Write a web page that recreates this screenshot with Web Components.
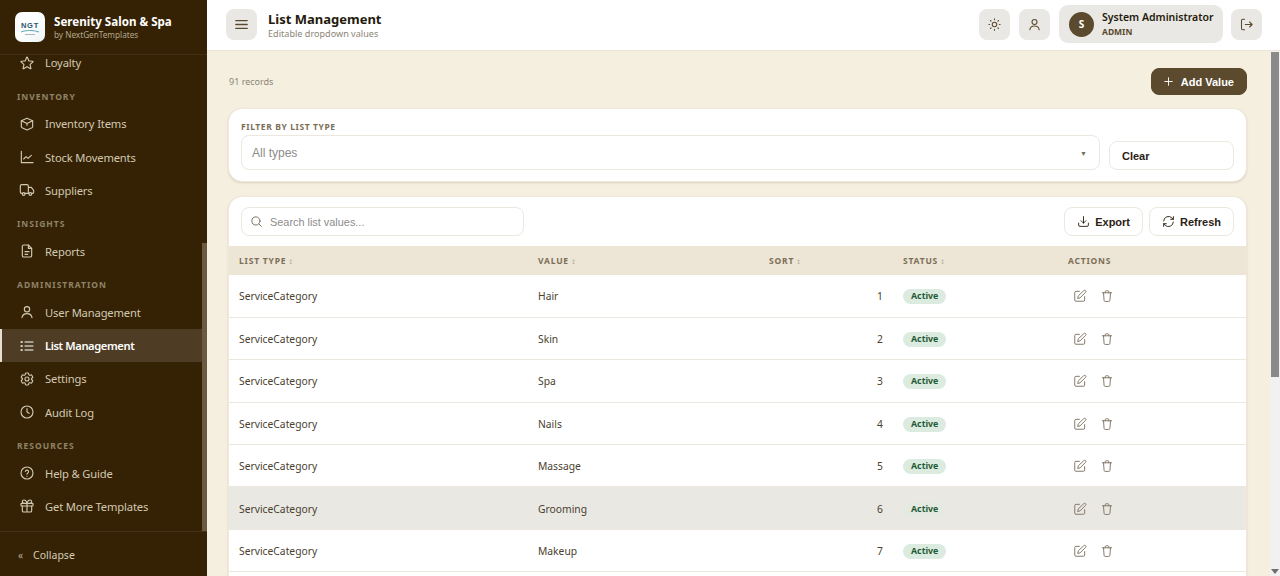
<!DOCTYPE html>
<html lang="en">
<head>
<meta charset="UTF-8">
<title>List Management</title>
<style>
  html, body { margin: 0; height: 100%; overflow: hidden; }
  body { font-family: "Noto Sans", "Liberation Sans", sans-serif; background: #f5efe0; }
</style>
</head>
<body>
<app-shell>
  <app-sidebar slot="sidebar">
    <nav-item icon="star">Loyalty</nav-item>
    <nav-section>INVENTORY</nav-section>
    <nav-item icon="box">Inventory Items</nav-item>
    <nav-item icon="chart">Stock Movements</nav-item>
    <nav-item icon="truck">Suppliers</nav-item>
    <nav-section>INSIGHTS</nav-section>
    <nav-item icon="doc">Reports</nav-item>
    <nav-section>ADMINISTRATION</nav-section>
    <nav-item icon="user">User Management</nav-item>
    <nav-item icon="list" active>List Management</nav-item>
    <nav-item icon="cog">Settings</nav-item>
    <nav-item icon="clock">Audit Log</nav-item>
    <nav-section>RESOURCES</nav-section>
    <nav-item icon="help">Help &amp; Guide</nav-item>
    <nav-item icon="gift">Get More Templates</nav-item>
  </app-sidebar>
  <top-bar slot="topbar" heading="List Management" sub="Editable dropdown values"></top-bar>
  <list-page></list-page>
</app-shell>

<script>
  const ICONS = {
    star: '<path d="M11.48 3.5a.56.56 0 0 1 1.04 0l2.13 5.11a.56.56 0 0 0 .47.35l5.52.44c.5.04.7.66.32.99l-4.2 3.6a.56.56 0 0 0-.18.56l1.28 5.38a.56.56 0 0 1-.84.61l-4.72-2.88a.56.56 0 0 0-.59 0l-4.72 2.88a.56.56 0 0 1-.84-.61l1.28-5.38a.56.56 0 0 0-.18-.56l-4.2-3.6a.56.56 0 0 1 .32-.99l5.52-.44a.56.56 0 0 0 .47-.35z"/>',
    box: '<path d="M12 3.5l8.5 3.6v8.6c0 .8-.4 1.4-1.1 1.8L12 21l-7.4-3.5c-.7-.4-1.1-1-1.1-1.8V7.100z"/><path d="M3.500 7.100l8.500 4 8.500-4M12 11.100V14"/>',
    chart: '<path d="M3.500 3.500V20.500H21"/><path d="M7 15l3.500-3.500 3 2.500 5-4.500"/>',
    truck: '<path d="M14 17H9M5 17H4a2 2 0 0 1-2-2V6a2 2 0 0 1 2-2h8a2 2 0 0 1 2 2v11h1M19 17h1.500a1.500 1.500 0 0 0 1.500-1.500v-3L18.500 8H14"/><circle cx="7" cy="18" r="2"/><circle cx="17" cy="18" r="2"/>',
    doc: '<path d="M14 3H7a2 2 0 0 0-2 2v14a2 2 0 0 0 2 2h10a2 2 0 0 0 2-2V8z"/><path d="M14 3v5h5M9 13h6M9 17h4"/>',
    user: '<circle cx="12" cy="8" r="4"/><path d="M4.500 20.500c.6-3.700 3.500-6 7.500-6s6.900 2.300 7.500 6"/>',
    list: '<path d="M9 6h12M9 12h12M9 18h12"/><path d="M3.500 6h1M3.500 12h1M3.500 18h1" stroke-width="2.600"/>',
    cog: '<path d="M9.594 3.94c.09-.542.56-.94 1.11-.94h2.593c.55 0 1.02.398 1.11.94l.213 1.281c.063.374.313.686.645.87.074.04.147.083.22.127.325.196.72.257 1.075.124l1.217-.456a1.125 1.125 0 0 1 1.37.49l1.296 2.247a1.125 1.125 0 0 1-.26 1.431l-1.003.827c-.293.241-.438.613-.43.992a7.723 7.723 0 0 1 0 .255c-.008.378.137.75.43.991l1.004.827c.424.35.534.955.26 1.43l-1.298 2.247a1.125 1.125 0 0 1-1.369.491l-1.217-.456c-.355-.133-.75-.072-1.076.124a6.47 6.47 0 0 1-.22.128c-.331.183-.581.495-.644.869l-.213 1.281c-.09.543-.56.94-1.11.94h-2.594c-.55 0-1.019-.398-1.11-.94l-.213-1.281c-.062-.374-.312-.686-.644-.87a6.52 6.52 0 0 1-.22-.127c-.325-.196-.72-.257-1.076-.124l-1.217.456a1.125 1.125 0 0 1-1.369-.49l-1.297-2.247a1.125 1.125 0 0 1 .26-1.431l1.004-.827c.292-.24.437-.613.43-.991a6.932 6.932 0 0 1 0-.255c.007-.38-.138-.751-.43-.992l-1.004-.827a1.125 1.125 0 0 1-.26-1.43l1.297-2.247a1.125 1.125 0 0 1 1.37-.491l1.216.456c.356.133.751.072 1.076-.124.072-.044.146-.086.22-.128.332-.183.582-.495.644-.869z"/><circle cx="12" cy="12" r="3"/>',
    clock: '<circle cx="12" cy="12" r="9"/><path d="M12 7v5l3 2"/>',
    help: '<circle cx="12" cy="12" r="9"/><path d="M9.500 9.500a2.500 2.500 0 0 1 4.900.7c0 1.700-2.400 2.100-2.400 3.600M12 17h.01"/>',
    gift: '<rect x="3" y="8" width="18" height="4" rx="1"/><path d="M12 8v13M19 12v7a2 2 0 0 1-2 2H7a2 2 0 0 1-2-2v-7M7.500 8a2.500 2.500 0 0 1 0-5C10 3 11.500 5.500 12 8c.5-2.500 2-5 4.500-5a2.500 2.500 0 0 1 0 5"/>',
    menu: '<path d="M4 6.500h16M4 12h16M4 17.500h16"/>',
    sun: '<circle cx="12" cy="12" r="3.600"/><path d="M12 3v1.200M12 19.800V21M3 12h1.200M19.800 12H21M5.600 5.600l.9.9M17.500 17.500l.9.9M5.600 18.400l.9-.9M17.500 6.500l.9-.9"/>',
    logout: '<path d="M9 3.500H6a2 2 0 0 0-2 2v13a2 2 0 0 0 2 2h3"/><path d="M10 12h11M17 8l4 4-4 4"/>',
    plus: '<path d="M12 5v14M5 12h14"/>',
    search: '<circle cx="11" cy="11" r="7.500"/><path d="M21 21l-4.500-4.500"/>',
    download: '<path d="M12 3v12M7.500 10.500L12 15l4.500-4.500"/><path d="M3 15v3.500A2.500 2.500 0 0 0 5.500 21h13a2.500 2.500 0 0 0 2.500-2.500V15"/>',
    refresh: '<path d="M3 11a9 9 0 0 1 15.700-5.300L21 8M21 3v5h-5M21 13a9 9 0 0 1-15.700 5.300L3 16M8 16H3v5"/>',
    edit: '<path d="M11 4H5a2 2 0 0 0-2 2v13a2 2 0 0 0 2 2h13a2 2 0 0 0 2-2v-6"/><path d="M18.500 2.800a2.100 2.100 0 0 1 3 3L12 15.300l-4 1 1-4z"/>',
    trash: '<path d="M4 6.500h16M9 6.500V4.500a1.500 1.500 0 0 1 1.500-1.500h3A1.500 1.500 0 0 1 15 4.500v2M6 6.500l1 13a2 2 0 0 0 2 1.800h6a2 2 0 0 0 2-1.800l1-13"/>'
  };

  class AppIcon extends HTMLElement {
    connectedCallback() {
      const size = this.getAttribute('size') || 16;
      const sw = this.getAttribute('stroke') || 1.7;
      this.attachShadow({ mode: 'open' }).innerHTML = `
        <style>:host { display: inline-flex; flex: none; } svg { display: block; }</style>
        <svg width="${size}" height="${size}" viewBox="0 0 24 24" fill="none" stroke="currentColor"
             stroke-width="${sw}" stroke-linecap="round" stroke-linejoin="round">${ICONS[this.getAttribute('name')]}</svg>`;
    }
  }
  customElements.define('app-icon', AppIcon);

  class AppShell extends HTMLElement {
    constructor() {
      super();
      this.attachShadow({ mode: 'open' }).innerHTML = `
        <style>
          :host { display: flex; height: 576px; overflow: hidden; }
          .main { flex: 1; min-width: 0; display: flex; flex-direction: column; }
          .body { flex: 1; min-height: 0; display: flex; }
          .page { flex: 1; min-width: 0; overflow: hidden; }
          .rail { width: 10px; flex: none; background: #f1f1f1; display: flex; flex-direction: column; }
          .thumb { width: 8px; margin: 1px 1px 0; height: 325px; background: #8a8a8a; }
          .down { margin-top: auto; margin-bottom: 2px; align-self: center; width: 0; height: 0;
                  border: 4px solid transparent; border-top: 5px solid #6e6e6e; border-bottom: 0; }
        </style>
        <slot name="sidebar"></slot>
        <div class="main">
          <slot name="topbar"></slot>
          <div class="body">
            <div class="page"><slot></slot></div>
            <div class="rail"><div class="thumb"></div><div class="down"></div></div>
          </div>
        </div>`;
    }
  }
  customElements.define('app-shell', AppShell);

  class AppSidebar extends HTMLElement {
    constructor() {
      super();
      this.attachShadow({ mode: 'open' }).innerHTML = `
        <style>
          :host { display: flex; flex-direction: column; width: 207px; flex: none; height: 576px;
                  background: #352204; color: #d6cdb8; }
          .brand { height: 55px; flex: none; box-sizing: border-box; display: flex; align-items: center;
                   gap: 9px; padding: 0 0 0 15px; border-bottom: 1px solid #432f13; }
          .logo { width: 30px; height: 30px; border-radius: 7px; background: linear-gradient(135deg, #fff 40%, #edf4f5);
                  display: flex; flex-direction: column; align-items: center; justify-content: center; gap: 1px; padding-top: 3px; box-sizing: border-box; }
          .logo b { font: 800 7.500px/7px "Liberation Sans", sans-serif; color: #26566e; letter-spacing: .8px; }
          .logo svg { display: block; }
          .name { font-size: 11.600px; line-height: 15px; font-weight: 700; color: #fff; white-space: nowrap; }
          .by { font-size: 8.200px; line-height: 11px; color: #b3a78f; white-space: nowrap; }
          .scroll { flex: 1; min-height: 0; display: flex; }
          .nav { flex: 1; min-width: 0; overflow: hidden; }
          /* the nav is scrolled a little, Loyalty sits under the brand row */
          .inner { margin-top: -8.700px; }
          .rail { width: 5px; flex: none; }
          .thumb { margin-top: 188px; height: 288px; background: #6a5a41; }
          .foot { height: 45px; flex: none; box-sizing: border-box; border-top: 1px solid #463216;
                  display: flex; align-items: center; gap: 10px; padding: 2px 0 0 18px;
                  font-size: 10.500px; color: #d6cdb8; }
          .foot i { font-style: normal; font-size: 10px; color: #b3a78f; }
        </style>
        <div class="brand">
          <div class="logo">
            <b>NGT</b>
            <svg width="20" height="5" viewBox="0 0 20 5"><path d="M1 2c5-2 12-2 18 0" fill="none" stroke="#5fa3b5" stroke-width="1"/><path d="M5 4.500h10" stroke="#9aa6aa" stroke-width=".8"/></svg>
          </div>
          <div><div class="name">Serenity Salon &amp; Spa</div><div class="by">by NextGenTemplates</div></div>
        </div>
        <div class="scroll">
          <div class="nav"><div class="inner"><slot></slot></div></div>
          <div class="rail"><div class="thumb"></div></div>
        </div>
        <div class="foot"><i>«</i><span>Collapse</span></div>`;
    }
  }
  customElements.define('app-sidebar', AppSidebar);

  class NavSection extends HTMLElement {
    constructor() {
      super();
      this.attachShadow({ mode: 'open' }).innerHTML = `
        <style>
          :host { display: block; box-sizing: border-box; height: 27.600px; padding: 11px 0 0 17px;
                  font-size: 8.500px; line-height: 12px; font-weight: 700; letter-spacing: 1px; color: #8f8267; }
        </style><slot></slot>`;
    }
  }
  customElements.define('nav-section', NavSection);

  class NavItem extends HTMLElement {
    connectedCallback() {
      this.attachShadow({ mode: 'open' }).innerHTML = `
        <style>
          :host { display: flex; align-items: center; gap: 10px; height: 33.300px; box-sizing: border-box;
                  padding-left: 19px; font-size: 11.200px; letter-spacing: -.15px; color: #d2c9b3; white-space: nowrap; }
          :host([active]) { background: #4e3d24; color: #fff; font-weight: 600; letter-spacing: -.4px;
                            border-left: 2px solid #e8e0cf; padding-left: 17px; }
        </style>
        <app-icon name="${this.getAttribute('icon')}" size="16"></app-icon><slot></slot>`;
    }
  }
  customElements.define('nav-item', NavItem);

  class TopBar extends HTMLElement {
    connectedCallback() {
      this.attachShadow({ mode: 'open' }).innerHTML = `
        <style>
          :host { display: flex; align-items: center; height: 51px; flex: none; box-sizing: border-box;
                  background: #fff; border-bottom: 1px solid #ebe5d7; padding: 0 18px 2px 19px; color: #5c4a2e; }
          .sq { width: 31px; height: 31px; border-radius: 8px; background: #e9e8e4; display: flex;
                align-items: center; justify-content: center; flex: none; }
          .title { margin: 3px 0 0 11px; flex: 1; }
          h1 { margin: 0; font-size: 13px; line-height: 16px; font-weight: 700; color: #241a0c; }
          p { margin: 1px 0 0; font-size: 9.100px; line-height: 12px; color: #8b8576; }
          .acts { display: flex; align-items: center; gap: 9px; }
          .who { height: 38px; width: 164px; box-sizing: border-box; border-radius: 9px; background: #e9e8e4;
                 display: flex; align-items: center; gap: 8px; padding-left: 10px; margin-right: -1px; }
          .av { width: 25px; height: 25px; border-radius: 50%; background: #5c4a2e; color: #fff; font-size: 10px;
                font-weight: 700; display: flex; align-items: center; justify-content: center; }
          .nm { font-size: 10.500px; line-height: 15px; font-weight: 600; color: #241a0c; white-space: nowrap; }
          .rl { margin-top: 1px; font-size: 8.500px; line-height: 12px; font-weight: 700; color: #5c4a2e; }
        </style>
        <div class="sq"><app-icon name="menu" size="17" stroke="2"></app-icon></div>
        <div class="title"><h1>${this.getAttribute('heading')}</h1><p>${this.getAttribute('sub')}</p></div>
        <div class="acts">
          <div class="sq"><app-icon name="sun" size="15"></app-icon></div>
          <div class="sq"><app-icon name="user" size="15"></app-icon></div>
          <div class="who"><div class="av">S</div><div><div class="nm">System Administrator</div><div class="rl">ADMIN</div></div></div>
          <div class="sq"><app-icon name="logout" size="15"></app-icon></div>
        </div>`;
    }
  }
  customElements.define('top-bar', TopBar);

  class AppBtn extends HTMLElement {
    connectedCallback() {
      const icon = this.getAttribute('icon');
      this.attachShadow({ mode: 'open' }).innerHTML = `
        <style>
          :host { display: inline-flex; align-items: center; justify-content: center; gap: 5px; box-sizing: border-box;
                  height: 29px; padding: 0 12px; border-radius: 8px; border: 1px solid #ece8df; background: #fff;
                  color: #2b2114; font: 700 11px "Liberation Sans", sans-serif; white-space: nowrap; }
          :host([primary]) { background: #5c4a2e; border-color: #5c4a2e; color: #fff; height: 27px; padding: 0 12px 0 10px; gap: 6px; }
          :host([left]) { justify-content: flex-start; }
        </style>
        ${icon ? `<app-icon name="${icon}" size="13"></app-icon>` : ''}<slot></slot>`;
    }
  }
  customElements.define('app-btn', AppBtn);

  class AppCard extends HTMLElement {
    constructor() {
      super();
      this.attachShadow({ mode: 'open' }).innerHTML = `
        <style>
          :host { display: block; background: #fff; border-radius: 14px; border: 1px solid #efe9db;
                  box-shadow: 0 1px 2px rgba(92,74,46,.18); }
        </style><slot></slot>`;
    }
  }
  customElements.define('app-card', AppCard);

  class ListTable extends HTMLElement {
    connectedCallback() {
      const values = ['Hair', 'Skin', 'Spa', 'Nails', 'Massage', 'Grooming', 'Makeup'];
      const sort = '<span class="s">↕</span>';
      const rows = values.map((v, i) => `
        <tr class="${i === 5 ? 'hover' : ''}">
          <td>ServiceCategory</td><td>${v}</td><td class="n">${i + 1}</td>
          <td><span class="pill">Active</span></td>
          <td><div class="act"><app-icon name="edit" size="14"></app-icon><app-icon name="trash" size="14"></app-icon></div></td>
        </tr>`).join('');
      this.attachShadow({ mode: 'open' }).innerHTML = `
        <style>
          :host { display: block; }
          table { width: 1018px; table-layout: fixed; border-collapse: collapse; }
          th { height: 29px; padding: 0 10px; box-sizing: border-box; background: #ede6d6; text-align: left;
               font-size: 8.500px; font-weight: 700; letter-spacing: .8px; color: #7c6f58; }
          td { height: 42.400px; padding: 1px 10px 0; box-sizing: border-box; border-bottom: 1px solid #ece8df;
               font-size: 10.300px; color: #4a3f30; }
          .s { font: 6px "DejaVu Sans", sans-serif; color: #b8ae9b; letter-spacing: 0; margin-left: -1px; }
          .n { text-align: right; }
          .hover td { background: #e9e8e3; }
          .pill { display: inline-block; height: 15px; line-height: 15px; padding: 0 8px; border-radius: 8px;
                  background: #dcebdf; color: #1f5a36; font-size: 8.800px; font-weight: 700; }
          .hover .pill { background: #e4eae1; }
          .act { display: flex; gap: 13px; padding-left: 5px; color: #85796a; }
        </style>
        <table>
          <colgroup><col style="width:299px"><col style="width:231px"><col style="width:134px"><col style="width:165px"><col style="width:189px"></colgroup>
          <thead><tr><th>LIST TYPE ${sort}</th><th>VALUE ${sort}</th><th>SORT ${sort}</th><th>STATUS ${sort}</th><th>ACTIONS</th></tr></thead>
          <tbody>${rows}</tbody>
        </table>`;
    }
  }
  customElements.define('list-table', ListTable);

  class ListPage extends HTMLElement {
    constructor() {
      super();
      this.attachShadow({ mode: 'open' }).innerHTML = `
        <style>
          :host { display: block; padding: 17px 23px 0 21px; }
          .head { display: flex; justify-content: space-between; align-items: center; margin-bottom: 13px; }
          .count { font-size: 9px; color: #8b8576; margin-left: 1px; }
          .filter { padding: 12px 12px 11px; margin-bottom: 14px; }
          .filter label { display: block; font-size: 8.500px; line-height: 12px; font-weight: 700; letter-spacing: .6px;
                          color: #7c6f58; margin-bottom: 2px; }
          .frow { display: flex; align-items: flex-end; gap: 9px; }
          .select, .search { box-sizing: border-box; border: 1px solid #ece8df; border-radius: 8px; display: flex; align-items: center;
                    font: 12px "Liberation Sans", sans-serif; color: #8c8c8c; }
          .select { flex: 1; height: 35px; padding: 1px 12px 0 10px; justify-content: space-between; }
          .select i { font-style: normal; font-size: 7px; color: #77705f; }
          .frow app-btn { width: 125px; }
          .bar { display: flex; align-items: center; gap: 6px; padding: 10px 12px; }
          .search { width: 283px; height: 29px; gap: 7px; padding-left: 8px; font-size: 10.900px; margin-right: auto; }
          .search app-icon { color: #6f6a5e; }
          /* the list runs on below the fold, the card must not close in view */
          .tbl { overflow: hidden; padding-bottom: 40px; }
        </style>
        <div class="head"><span class="count">91 records</span><app-btn primary icon="plus">Add Value</app-btn></div>
        <app-card class="filter">
          <label>FILTER BY LIST TYPE</label>
          <div class="frow">
            <div class="select"><span>All types</span><i>▼</i></div>
            <app-btn left>Clear</app-btn>
          </div>
        </app-card>
        <app-card>
          <div class="bar">
            <div class="search"><app-icon name="search" size="13"></app-icon><span>Search list values...</span></div>
            <app-btn icon="download">Export</app-btn>
            <app-btn icon="refresh">Refresh</app-btn>
          </div>
          <div class="tbl"><list-table></list-table></div>
        </app-card>`;
    }
  }
  customElements.define('list-page', ListPage);
</script>
</body>
</html>
